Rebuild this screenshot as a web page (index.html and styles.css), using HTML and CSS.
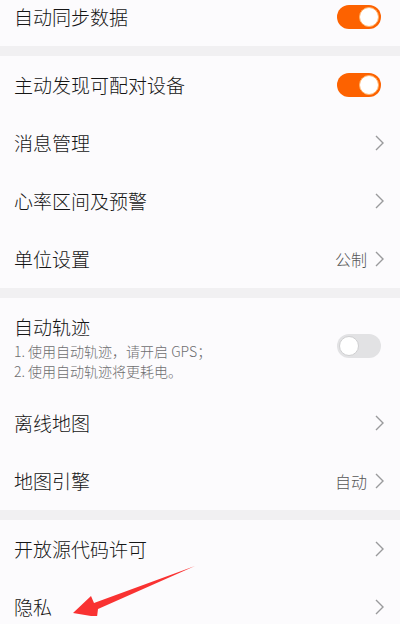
FILE: index.html
```html
<!DOCTYPE html>
<html lang="zh-CN">
<head>
    <meta charset="UTF-8">
    <meta name="viewport" content="width=device-width, initial-scale=1.0">
    <title>设置</title>
    <link rel="stylesheet" href="styles.css">
</head>
<body>
    <div class="group first">
        <div class="row">
            <span class="label">自动同步数据</span>
            <span class="switch on"></span>
        </div>
    </div>

    <div class="group">
        <div class="row">
            <span class="label">主动发现可配对设备</span>
            <span class="switch on"></span>
        </div>
        <div class="row">
            <span class="label">消息管理</span>
            <span class="more"><svg class="chevron" viewBox="0 0 9 16"><polyline points="1,1 8,8 1,15"/></svg></span>
        </div>
        <div class="row">
            <span class="label">心率区间及预警</span>
            <span class="more"><svg class="chevron" viewBox="0 0 9 16"><polyline points="1,1 8,8 1,15"/></svg></span>
        </div>
        <div class="row">
            <span class="label">单位设置</span>
            <span class="more"><span class="value">公制</span><svg class="chevron" viewBox="0 0 9 16"><polyline points="1,1 8,8 1,15"/></svg></span>
        </div>
    </div>

    <div class="group">
        <div class="row tall">
            <div class="text">
                <div class="label">自动轨迹</div>
                <div class="sub">1. 使用自动轨迹，请开启 GPS；</div>
                <div class="sub">2. 使用自动轨迹将更耗电。</div>
            </div>
            <span class="switch"></span>
        </div>
        <div class="row">
            <span class="label">离线地图</span>
            <span class="more"><svg class="chevron" viewBox="0 0 9 16"><polyline points="1,1 8,8 1,15"/></svg></span>
        </div>
        <div class="row">
            <span class="label">地图引擎</span>
            <span class="more"><span class="value">自动</span><svg class="chevron" viewBox="0 0 9 16"><polyline points="1,1 8,8 1,15"/></svg></span>
        </div>
    </div>

    <div class="group">
        <div class="row">
            <span class="label">开放源代码许可</span>
            <span class="more"><svg class="chevron" viewBox="0 0 9 16"><polyline points="1,1 8,8 1,15"/></svg></span>
        </div>
        <div class="row">
            <span class="label">隐私</span>
            <span class="more"><svg class="chevron" viewBox="0 0 9 16"><polyline points="1,1 8,8 1,15"/></svg></span>
        </div>
    </div>

    <!-- red pointer drawn over the list -->
    <svg class="pointer" viewBox="0 0 130 50">
        <polygon points="1,47 19,30 22,37 123,0 26,43 25,51"/>
    </svg>
</body>
</html>
```

FILE: styles.css
```css
body {
    margin: 0;
    background-color: #f1f0f2;
    font-family: "Noto Sans CJK SC", "Noto Sans", sans-serif;
    color: #151515;
    height: 624px;
    overflow: hidden;
    position: relative;
}

.group {
    background-color: #fcfbfd;
    margin-bottom: 10px;
}

.group.first {
    margin-top: -12px;
}

.row {
    display: flex;
    justify-content: space-between;
    align-items: center;
    height: 58px;
    padding: 0 16px 0 14px;
}

.row.tall {
    height: 96px;
    align-items: flex-start;
}

.label {
    font-size: 19px;
    line-height: 26px;
    font-weight: 300;
}

.tall .text {
    padding-top: 16px;
}

.tall .label {
    margin-bottom: 1px;
}

.sub {
    font-size: 14px;
    line-height: 20px;
    font-weight: 300;
    color: #6e6e70;
}

.tall .switch {
    margin-top: 36px;
}

.switch {
    position: relative;
    width: 44px;
    height: 24px;
    border-radius: 12px;
    background-color: #e2e2e4;
    margin-right: 3px;
    box-sizing: border-box;
}

.switch::after {
    content: "";
    position: absolute;
    top: 2px;
    left: 2px;
    width: 20px;
    height: 20px;
    border-radius: 50%;
    background-color: white;
    box-sizing: border-box;
    border: 1px solid #cfcfd1;
}

.switch.on {
    background-color: #fd6200;
}

.switch.on::after {
    left: 22px;
    border-color: #ffb36a;
}

.more {
    display: flex;
    align-items: center;
}

.value {
    font-size: 16px;
    font-weight: 300;
    color: #555;
    margin-right: 8px;
}

.chevron {
    width: 9px;
    height: 16px;
    fill: none;
    stroke: #9a9a9c;
    stroke-width: 1.4;
}

.pointer {
    position: absolute;
    left: 72px;
    top: 566px;
    width: 130px;
    height: 50px;
    fill: #f93232;
}
```
